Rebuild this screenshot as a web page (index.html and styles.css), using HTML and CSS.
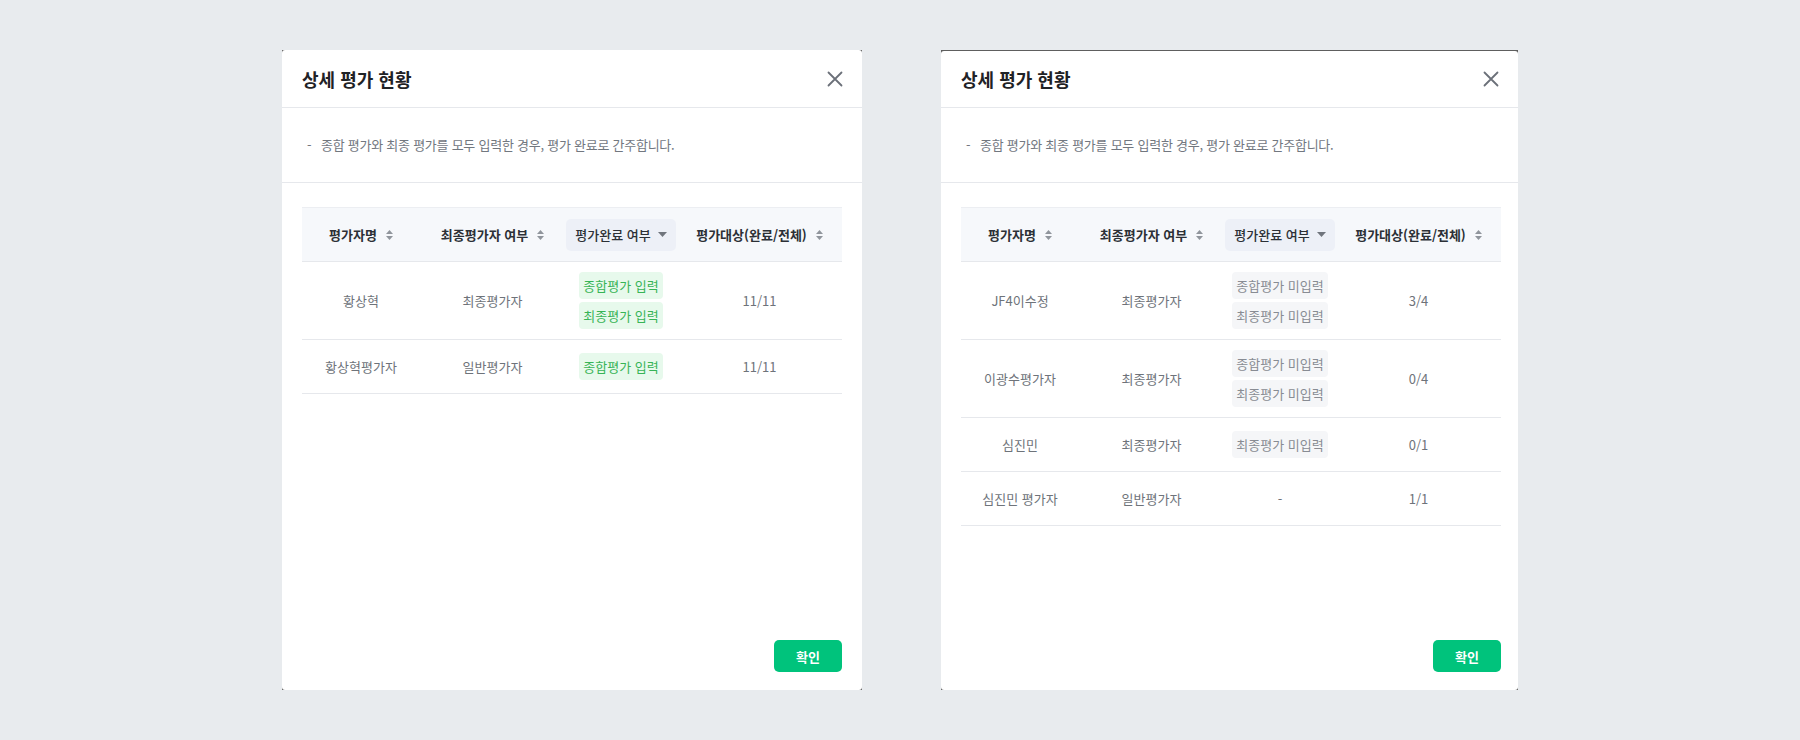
FILE: index.html
```html
<!DOCTYPE html>
<html lang="ko">
<head>
<meta charset="utf-8">
<title>상세 평가 현황</title>
<link rel="stylesheet" href="styles.css">
</head>
<body>
<div class="stage">

  <div class="modal-frame modal-frame--wide">
    <section class="modal">
      <header class="modal-header">
        <h2 class="modal-title">상세 평가 현황</h2>
        <button class="close-btn" aria-label="닫기">
          <svg width="16" height="16" viewBox="0 0 16 16"><path d="M1.5 1.5L14.5 14.5M14.5 1.5L1.5 14.5" stroke="#6b7079" stroke-width="1.8" stroke-linecap="round" fill="none"/></svg>
        </button>
      </header>
      <div class="modal-desc">
        <p class="desc-item"><span class="desc-dash">-</span>종합 평가와 최종 평가를 모두 입력한 경우, 평가 완료로 간주합니다.</p>
      </div>
      <div class="modal-body">
        <div class="grid">
          <div class="grid-row grid-head">
            <div class="th"><span>평가자명</span><svg class="sort" width="7" height="10" viewBox="0 0 7 10"><path d="M3.5 0L7 4H0Z M0 6H7L3.5 10Z" fill="#90959c"/></svg></div>
            <div class="th"><span>최종평가자 여부</span><svg class="sort" width="7" height="10" viewBox="0 0 7 10"><path d="M3.5 0L7 4H0Z M0 6H7L3.5 10Z" fill="#90959c"/></svg></div>
            <div class="th th--active"><div class="th-box"><span>평가완료 여부</span><svg width="9" height="5" viewBox="0 0 9 5"><path d="M0 0H9L4.5 5Z" fill="#70757d"/></svg></div></div>
            <div class="th"><span>평가대상(완료/전체)</span><svg class="sort" width="7" height="10" viewBox="0 0 7 10"><path d="M3.5 0L7 4H0Z M0 6H7L3.5 10Z" fill="#90959c"/></svg></div>
          </div>
          <div class="grid-row">
            <div class="td">황상혁</div>
            <div class="td">최종평가자</div>
            <div class="td td--tags"><span class="tag tag--done">종합평가 입력</span><span class="tag tag--done">최종평가 입력</span></div>
            <div class="td">11/11</div>
          </div>
          <div class="grid-row">
            <div class="td">황상혁평가자</div>
            <div class="td">일반평가자</div>
            <div class="td td--tags"><span class="tag tag--done">종합평가 입력</span></div>
            <div class="td">11/11</div>
          </div>
        </div>
      </div>
      <footer class="modal-footer">
        <button class="btn-primary">확인</button>
      </footer>
    </section>
  </div>

  <div class="modal-frame modal-frame--line">
    <section class="modal">
      <header class="modal-header">
        <h2 class="modal-title">상세 평가 현황</h2>
        <button class="close-btn" aria-label="닫기">
          <svg width="16" height="16" viewBox="0 0 16 16"><path d="M1.5 1.5L14.5 14.5M14.5 1.5L1.5 14.5" stroke="#6b7079" stroke-width="1.8" stroke-linecap="round" fill="none"/></svg>
        </button>
      </header>
      <div class="modal-desc">
        <p class="desc-item"><span class="desc-dash">-</span>종합 평가와 최종 평가를 모두 입력한 경우, 평가 완료로 간주합니다.</p>
      </div>
      <div class="modal-body">
        <div class="grid">
          <div class="grid-row grid-head">
            <div class="th"><span>평가자명</span><svg class="sort" width="7" height="10" viewBox="0 0 7 10"><path d="M3.5 0L7 4H0Z M0 6H7L3.5 10Z" fill="#90959c"/></svg></div>
            <div class="th"><span>최종평가자 여부</span><svg class="sort" width="7" height="10" viewBox="0 0 7 10"><path d="M3.5 0L7 4H0Z M0 6H7L3.5 10Z" fill="#90959c"/></svg></div>
            <div class="th th--active"><div class="th-box"><span>평가완료 여부</span><svg width="9" height="5" viewBox="0 0 9 5"><path d="M0 0H9L4.5 5Z" fill="#70757d"/></svg></div></div>
            <div class="th"><span>평가대상(완료/전체)</span><svg class="sort" width="7" height="10" viewBox="0 0 7 10"><path d="M3.5 0L7 4H0Z M0 6H7L3.5 10Z" fill="#90959c"/></svg></div>
          </div>
          <div class="grid-row">
            <div class="td">JF4이수정</div>
            <div class="td">최종평가자</div>
            <div class="td td--tags"><span class="tag tag--todo">종합평가 미입력</span><span class="tag tag--todo">최종평가 미입력</span></div>
            <div class="td">3/4</div>
          </div>
          <div class="grid-row">
            <div class="td">이광수평가자</div>
            <div class="td">최종평가자</div>
            <div class="td td--tags"><span class="tag tag--todo">종합평가 미입력</span><span class="tag tag--todo">최종평가 미입력</span></div>
            <div class="td">0/4</div>
          </div>
          <div class="grid-row">
            <div class="td">심진민</div>
            <div class="td">최종평가자</div>
            <div class="td td--tags"><span class="tag tag--todo">최종평가 미입력</span></div>
            <div class="td">0/1</div>
          </div>
          <div class="grid-row">
            <div class="td">심진민 평가자</div>
            <div class="td">일반평가자</div>
            <div class="td">-</div>
            <div class="td">1/1</div>
          </div>
        </div>
      </div>
      <footer class="modal-footer">
        <button class="btn-primary">확인</button>
      </footer>
    </section>
  </div>

</div>
</body>
</html>
```

FILE: styles.css
```css
* { box-sizing: border-box; }

html, body {
  margin: 0;
  padding: 0;
}

body {
  width: 1800px;
  height: 740px;
  background: #e8ebee;
  font-family: "Noto Sans CJK KR", "Noto Sans", sans-serif;
  color: #333;
  overflow: hidden;
}

.stage {
  display: flex;
  justify-content: center;
  align-items: flex-start;
  gap: 79px;
  padding-top: 50px;
}

.modal-frame {
  width: 577px;
  height: 640px;
  background: #5e5e5e;
  display: flex;
}

.modal-frame--wide { width: 580px; }

.modal-frame--line { padding-top: 1px; }

.modal {
  flex: 1;
  background: #fff;
  border-radius: 3px;
  display: flex;
  flex-direction: column;
}

.modal-header {
  display: flex;
  align-items: center;
  justify-content: space-between;
  height: 58px;
  padding: 1px 20px 0 20px;
  border-bottom: 1px solid #e6e8ec;
}

.modal-frame--line .modal-header {
  height: 57px;
  padding-top: 0;
}

.modal-title {
  margin: 0;
  font-size: 18px;
  line-height: 24px;
  font-weight: 700;
  color: #1f2226;
}

.close-btn {
  border: 0;
  background: none;
  padding: 0;
  width: 16px;
  height: 16px;
  display: flex;
  margin-right: -1px;
}

.modal-desc {
  height: 75px;
  padding: 27px 20px 0 25px;
  border-bottom: 1px solid #e6e8ec;
}

.desc-item {
  margin: 0;
  font-size: 13px;
  line-height: 20px;
  letter-spacing: -0.25px;
  color: #72777f;
}

.desc-dash {
  display: inline-block;
  width: 14px;
}

.modal-body {
  flex: 1;
  padding: 24px 20px 0 20px;
}

.modal-frame--line .modal-body {
  padding-right: 17px;
}

.grid {
  display: flex;
  flex-direction: column;
}

.grid-row {
  display: grid;
  grid-template-columns: 118px 145px 112px 165px;
  min-height: 54px;
  border-bottom: 1px solid #e6e8ec;
}

.grid-head {
  background: #f6f8fb;
  border-top: 1px solid #eceef2;
  min-height: 55px;
}

.th {
  display: flex;
  align-items: center;
  justify-content: center;
  gap: 9px;
  font-size: 13px;
  font-weight: 700;
  color: #2c3036;
  white-space: nowrap;
}

.th--active { padding: 0 1px; }

.th-box {
  width: 100%;
  height: 32px;
  border-radius: 5px;
  background: #edf0f7;
  display: flex;
  align-items: center;
  justify-content: center;
  gap: 7px;
  font-weight: 500;
  color: #2c3036;
}

.td {
  display: flex;
  align-items: center;
  justify-content: center;
  padding: 10px 0;
  font-size: 13px;
  line-height: 20px;
  color: #6e737a;
  white-space: nowrap;
}

.td--tags {
  flex-direction: column;
  gap: 3px;
}

.tag {
  display: inline-flex;
  align-items: center;
  height: 27px;
  padding: 0 4px;
  border-radius: 4px;
  font-size: 13px;
}

.tag--done {
  background: #e7f9ec;
  color: #37b456;
}

.tag--todo {
  background: #f5f6f8;
  color: #888c93;
}

.modal-footer {
  display: flex;
  justify-content: flex-end;
  padding: 0 20px 18px 20px;
}

.modal-frame--line .modal-footer {
  padding-right: 17px;
}

.btn-primary {
  width: 68px;
  height: 32px;
  border: 0;
  border-radius: 5px;
  background: #00c37c;
  color: #fff;
  font-family: inherit;
  font-size: 13px;
  font-weight: 700;
}
```
